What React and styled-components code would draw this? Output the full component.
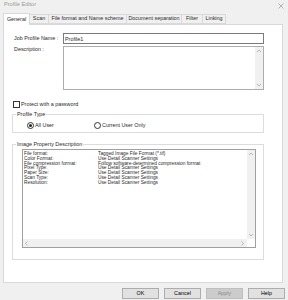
import React from 'react';
import styled, { createGlobalStyle } from 'styled-components';

const GlobalStyle = createGlobalStyle`
  html, body {
    margin: 0;
    padding: 0;
    background: #f0f0f0;
  }
  body {
    font-family: "Liberation Sans", Arial, sans-serif;
  }
`;

const tabs = [
    { name: 'General', w: 27 },
    { name: 'Scan', w: 20 },
    { name: 'File format and Name scheme', w: 79 },
    { name: 'Document separation', w: 56 },
    { name: 'Filter', w: 22 },
    { name: 'Linking', w: 24 },
];

const properties = [
    ['File format:', 'Tagged Image File Format (*.tif)'],
    ['Color Format:', 'Use Detail Scanner Settings'],
    ['File compression format:', 'Follow software-determined compression format'],
    ['Pixel Type:', 'Use Detail Scanner Settings'],
    ['Paper Size:', 'Use Detail Scanner Settings'],
    ['Scan Type:', 'Use Detail Scanner Settings'],
    ['Resolution:', 'Use Detail Scanner Settings'],
];

const Arrow = ({ dir }) => {
    const paths = {
        up: 'M1 3.5 L3 1.5 L5 3.5',
        down: 'M1 1.5 L3 3.5 L5 1.5',
        left: 'M3.5 1 L1.5 3 L3.5 5',
        right: 'M1.5 1 L3.5 3 L1.5 5',
    };
    return (
        <svg width="6" height="6" viewBox="0 0 6 5">
            <path d={paths[dir]} fill="none" stroke="#a6a6a6" strokeWidth="0.8" />
        </svg>
    );
};

const App = () => {
    const [active, setActive] = React.useState(0);
    const [profileName, setProfileName] = React.useState('Profile1');
    const [userType, setUserType] = React.useState('all');

    return (
        <Dialog>
            <GlobalStyle />
            <TitleBar>
                <span>Profile Editor</span>
                <svg width="6" height="6" viewBox="0 0 6 6">
                    <path d="M0.5 0.5 L5.5 5.5 M5.5 0.5 L0.5 5.5" stroke="#9a9a9a" strokeWidth="0.7" />
                </svg>
            </TitleBar>
            <TabStrip>
                {tabs.map((t, idx) => (
                    <Tab key={t.name} $w={t.w} $active={idx === active} onClick={() => setActive(idx)}>
                        {t.name}
                    </Tab>
                ))}
            </TabStrip>
            <Panel>
                <FormGrid>
                    <Label>Job Profile Name :</Label>
                    <TextInput value={profileName} onChange={(e) => setProfileName(e.target.value)} />
                    <Label $top>Description :</Label>
                    <TextArea>
                        <TextAreaBody />
                        <VScroll>
                            <Arrow dir="up" />
                            <Arrow dir="down" />
                        </VScroll>
                    </TextArea>
                </FormGrid>
                <CheckRow>
                    <CheckBox />
                    <span>Protect with a password</span>
                </CheckRow>
                <Group $h={22} $mt={3}>
                    <Legend>Profile Type</Legend>
                    <RadioRow>
                        <RadioItem $w={67} onClick={() => setUserType('all')}>
                            <Radio $checked={userType === 'all'} />
                            All User
                        </RadioItem>
                        <RadioItem onClick={() => setUserType('current')}>
                            <Radio $checked={userType === 'current'} />
                            Current User Only
                        </RadioItem>
                    </RadioRow>
                </Group>
                <Group $h={119} $mt={8}>
                    <Legend>Image Property Description</Legend>
                    <ListBox>
                        <ListMain>
                            <ListRows>
                                {properties.map(([k, v]) => (
                                    <ListRow key={k}>
                                        <span>{k}</span>
                                        <span>{v}</span>
                                    </ListRow>
                                ))}
                            </ListRows>
                            <VScroll>
                                <Arrow dir="up" />
                                <Arrow dir="down" />
                            </VScroll>
                        </ListMain>
                        <HScroll>
                            <Arrow dir="left" />
                            <Arrow dir="right" />
                        </HScroll>
                    </ListBox>
                </Group>
            </Panel>
            <Footer>
                <Button>OK</Button>
                <Button>Cancel</Button>
                <Button disabled>Apply</Button>
                <Button>Help</Button>
            </Footer>
        </Dialog>
    );
};

const Dialog = styled.div`
    width: 288px;
    height: 300px;
    background: #f0f0f0;
    display: flex;
    flex-direction: column;
    overflow: hidden;
    font-size: 5.4px;
    line-height: 1;
    color: #2a2a2a;
`;

const TitleBar = styled.div`
    height: 12px;
    padding: 2px 4px 0 4px;
    box-sizing: border-box;
    display: flex;
    justify-content: space-between;
    align-items: flex-start;
    color: #9a9a9a;
    font-size: 5.6px;
    svg {
        margin-top: 1px;
    }
`;

const TabStrip = styled.div`
    height: 12px;
    display: flex;
    align-items: flex-end;
    padding-left: 4px;
    position: relative;
    z-index: 1;
`;

const Tab = styled.div`
    width: ${(p) => p.$w}px;
    height: ${(p) => (p.$active ? 12 : 10)}px;
    box-sizing: border-box;
    border: 1px solid #d9d9d9;
    border-bottom: ${(p) => (p.$active ? 'none' : '1px solid #d9d9d9')};
    margin-left: -1px;
    margin-bottom: ${(p) => (p.$active ? '-1px' : '0')};
    background: ${(p) => (p.$active ? '#fff' : '#f0f0f0')};
    display: flex;
    align-items: center;
    justify-content: center;
    white-space: nowrap;
    cursor: default;
`;

const Panel = styled.div`
    height: 259px;
    margin: 0 5px 0 3px;
    box-sizing: border-box;
    border: 1px solid #d9d9d9;
    background: #fff;
    padding: 8px 0 0 0;
    display: flex;
    flex-direction: column;
`;

const FormGrid = styled.div`
    display: grid;
    grid-template-columns: 59px 201px;
    row-gap: 2px;
`;

const Label = styled.div`
    padding-left: 10px;
    display: flex;
    align-items: ${(p) => (p.$top ? 'flex-start' : 'center')};
    padding-top: ${(p) => (p.$top ? '1px' : '0')};
`;

const TextInput = styled.input`
    height: 11px;
    box-sizing: border-box;
    border: 1px solid #7a7a7a;
    padding: 0 1px;
    margin: 0;
    font: inherit;
    font-size: 5.4px;
    color: #2a2a2a;
    outline: none;
`;

const TextArea = styled.div`
    height: 44px;
    box-sizing: border-box;
    border: 1px solid #abadb3;
    display: flex;
`;

const TextAreaBody = styled.div`
    flex: 1;
`;

const VScroll = styled.div`
    width: 8px;
    background: #f0f0f0;
    display: flex;
    flex-direction: column;
    justify-content: space-between;
    align-items: center;
    padding: 1px 0;
`;

const CheckRow = styled.div`
    display: flex;
    align-items: center;
    gap: 1px;
    margin: 11px 0 0 9px;
`;

const CheckBox = styled.div`
    width: 7px;
    height: 7px;
    box-sizing: border-box;
    border: 1px solid #333;
    background: #fff;
`;

const Group = styled.fieldset`
    margin: ${(p) => p.$mt}px 0 0 8px;
    width: 252px;
    height: ${(p) => p.$h}px;
    box-sizing: border-box;
    border: 1px solid #dcdcdc;
    padding: 0;
    min-width: 0;
`;

const Legend = styled.legend`
    margin-left: 3px;
    padding: 0 1px;
    line-height: 6px;
`;

const RadioRow = styled.div`
    display: flex;
    align-items: center;
    padding: 5px 0 0 14px;
`;

const RadioItem = styled.div`
    width: ${(p) => (p.$w ? `${p.$w}px` : 'auto')};
    display: flex;
    align-items: center;
    gap: 1px;
    cursor: default;
`;

const Radio = styled.div`
    width: 7px;
    height: 7px;
    box-sizing: border-box;
    border-radius: 50%;
    border: 1px solid #333;
    background: #fff;
    display: flex;
    align-items: center;
    justify-content: center;
    &::after {
        content: '';
        width: 3px;
        height: 3px;
        border-radius: 50%;
        background: ${(p) => (p.$checked ? '#222' : 'transparent')};
    }
`;

const ListBox = styled.div`
    margin: 2px 0 0 9px;
    width: 234px;
    height: 99px;
    box-sizing: border-box;
    border: 1px solid #a0a0a0;
    display: flex;
    flex-direction: column;
`;

const ListMain = styled.div`
    flex: 1;
    display: flex;
    min-height: 0;
`;

const ListRows = styled.div`
    flex: 1;
    padding: 2px 0 0 1px;
    overflow: hidden;
    font-size: 4.8px;
`;

const ListRow = styled.div`
    display: grid;
    grid-template-columns: 74px 1fr;
    height: 4.8px;
    line-height: 4.8px;
    white-space: nowrap;
`;

const HScroll = styled.div`
    height: 8px;
    margin-right: 8px;
    background: #f0f0f0;
    display: flex;
    justify-content: space-between;
    align-items: center;
    padding: 0 1px;
`;

const Footer = styled.div`
    display: flex;
    justify-content: flex-end;
    gap: 5px;
    padding: 5px 3px 0 0;
`;

const Button = styled.button`
    width: 37px;
    height: 11px;
    box-sizing: border-box;
    margin: 0;
    padding: 0;
    border: 1px solid ${(p) => (p.disabled ? '#bfbfbf' : '#adadad')};
    background: ${(p) => (p.disabled ? '#cccccc' : '#e1e1e1')};
    color: ${(p) => (p.disabled ? '#8a8a8a' : '#000')};
    font-family: inherit;
    font-size: 5.4px;
    line-height: 1;
`;

export default App;
